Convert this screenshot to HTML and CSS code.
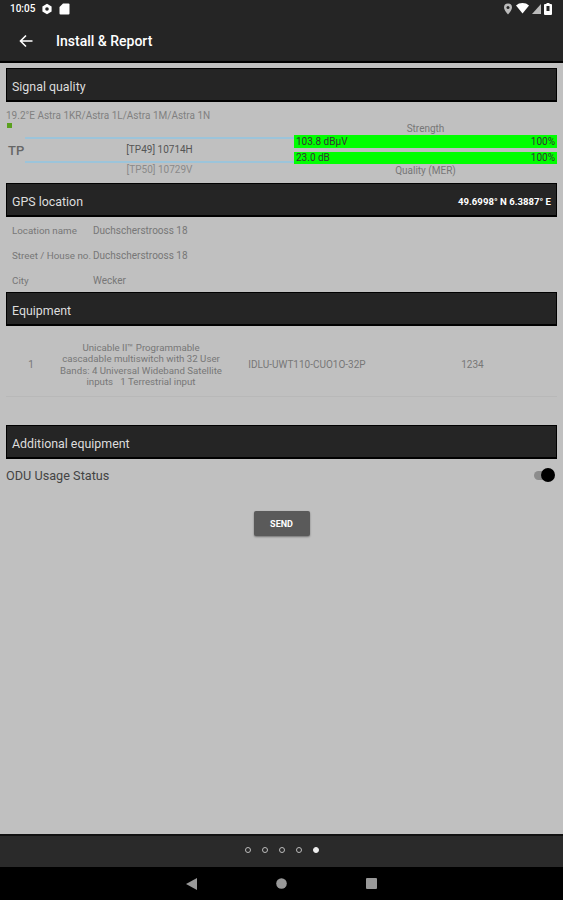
FILE: index.html
```html
<!DOCTYPE html>
<html lang="en">
<head>
  <meta charset="UTF-8">
  <meta name="viewport" content="width=device-width, initial-scale=1.0">
  <title>Install &amp; Report</title>
  <link rel="stylesheet" href="styles.css">
</head>
<body>
  <div class="app">
    <div class="statusbar">
      <div class="status-left">
        <span class="clock">10:05</span>
        <svg class="status-icon" width="12" height="12" viewBox="0 0 12 12"><path fill="#fff" d="M6 .8l4.6 2.6v5.2L6 11.200 1.400 8.600V3.400z"/><circle cx="6" cy="6" r="1.800" fill="#252525"/></svg>
        <svg class="status-icon" width="11" height="12" viewBox="0 0 11 12"><path fill="#fff" d="M4 .5h5.500a1 1 0 0 1 1 1v9a1 1 0 0 1-1 1h-8a1 1 0 0 1-1-1V4z"/></svg>
      </div>
      <div class="status-right">
        <svg width="10" height="12" viewBox="0 0 10 12"><path fill="#bbb" d="M5 .5a4 4 0 0 1 4 4c0 2.800-4 7-4 7s-4-4.200-4-7a4 4 0 0 1 4-4z"/><circle cx="5" cy="4.500" r="1.500" fill="#252525"/></svg>
        <svg width="13" height="11" viewBox="0 0 13 11"><path fill="#fff" d="M0 2.500C3.500-.8 9.500-.8 13 2.500L6.500 10.500z"/></svg>
        <svg width="9" height="10" viewBox="0 0 9 10"><path fill="#bbb" d="M9 0v10H0z"/></svg>
        <svg width="8" height="12" viewBox="0 0 8 12"><path fill="#fff" d="M2.500 0h3v1H7a1 1 0 0 1 1 1v9a1 1 0 0 1-1 1H1a1 1 0 0 1-1-1V2a1 1 0 0 1 1-1h1.500z"/><rect x="2.500" y="3" width="3" height="5" fill="#252525"/></svg>
      </div>
    </div>
    <div class="toolbar">
      <svg class="back" width="14" height="14" viewBox="0 0 14 14"><path fill="none" stroke="#fff" stroke-width="1.600" d="M13.500 7H1.500M7 1.500L1.500 7 7 12.500"/></svg>
      <span class="toolbar-title">Install &amp; Report</span>
    </div>

    <div class="content">
      <div class="section-header">Signal quality</div>
      <div class="signal">
        <div class="satellite">19.2°E Astra 1KR/Astra 1L/Astra 1M/Astra 1N</div>
        <div class="sat-dot"></div>
        <div class="signal-grid">
          <div class="tp-label">TP</div>
          <div class="tp-list">
            <div class="tp-current">[TP49] 10714H</div>
            <div class="tp-next">[TP50] 10729V</div>
          </div>
          <div class="meters">
            <div class="meter-title">Strength</div>
            <div class="meter"><span>103.8 dBµV</span><span>100%</span></div>
            <div class="meter"><span>23.0 dB</span><span>100%</span></div>
            <div class="meter-title">Quality (MER)</div>
          </div>
        </div>
      </div>

      <div class="section-header header-split">
        <span>GPS location</span>
        <span class="coords">49.6998° N 6.3887° E</span>
      </div>
      <div class="location">
        <div class="loc-row"><span class="loc-label">Location name</span><span>Duchscherstrooss 18</span></div>
        <div class="loc-row"><span class="loc-label">Street / House no.</span><span>Duchscherstrooss 18</span></div>
        <div class="loc-row"><span class="loc-label">City</span><span>Wecker</span></div>
      </div>

      <div class="section-header">Equipment</div>
      <div class="equipment">
        <div class="equip-row">
          <div class="equip-num">1</div>
          <div class="equip-desc">Unicable II™ Programmable cascadable multiswitch with 32 User Bands: 4 Universal Wideband Satellite inputs&nbsp;&nbsp; 1 Terrestrial input</div>
          <div class="equip-model">IDLU-UWT110-CUO1O-32P</div>
          <div class="equip-serial">1234</div>
        </div>
      </div>

      <div class="section-header">Additional equipment</div>
      <div class="odu">
        <span>ODU Usage Status</span>
        <div class="switch"><div class="switch-thumb"></div></div>
      </div>
      <div class="send-wrap"><button type="button" class="send-button">SEND</button></div>
    </div>

    <div class="pager">
      <span class="dot"></span>
      <span class="dot"></span>
      <span class="dot"></span>
      <span class="dot"></span>
      <span class="dot dot-active"></span>
    </div>
    <div class="navbar">
      <svg width="11" height="12" viewBox="0 0 11 12"><path fill="#999" d="M11 0v12L0 6z"/></svg>
      <svg width="11" height="11" viewBox="0 0 11 11"><circle cx="5.500" cy="5.500" r="5.300" fill="#999"/></svg>
      <svg width="11" height="11" viewBox="0 0 11 11"><rect width="11" height="11" rx="1" fill="#999"/></svg>
    </div>
  </div>
</body>
</html>
```
FILE: styles.css
```css
body {
  font-family: Roboto, "Liberation Sans", sans-serif;
  background-color: #c0c0c0;
  margin: 0;
  padding: 0;
}

.app {
  display: flex;
  flex-direction: column;
  height: 900px;
  overflow: hidden;
}

.statusbar {
  background: #252525;
  color: #fff;
  height: 22px;
  box-sizing: border-box;
  display: flex;
  justify-content: space-between;
  align-items: center;
  padding: 0 10px 5px;
  flex: none;
}

.status-left,
.status-right {
  display: flex;
  align-items: center;
}

.status-left {
  gap: 6px;
}

.status-right {
  gap: 3px;
  margin-right: 1px;
}

.clock {
  font-size: 10px;
  font-weight: 500;
}

.toolbar {
  background: #252525;
  height: 41px;
  box-sizing: border-box;
  border-bottom: 2px solid #000;
  display: flex;
  align-items: center;
  padding: 1px 0 3px 19px;
  flex: none;
}

.back {
  margin-right: 23px;
}

.toolbar-title {
  color: #fff;
  font-size: 14px;
  font-weight: 500;
}

.content {
  flex: 1;
  padding: 5px 6px 0;
  color: #777;
  font-size: 10px;
}

.section-header {
  background: #252525;
  color: #ddd;
  height: 34px;
  box-sizing: border-box;
  border: 1px solid #000;
  border-bottom-width: 2px;
  display: flex;
  align-items: center;
  padding: 3px 0 0 5px;
  font-size: 12.4px;
}

.header-split {
  justify-content: space-between;
  padding-right: 5px;
}

.coords {
  color: #fff;
  font-size: 9.6px;
  font-weight: 700;
}

.signal {
  height: 81px;
}

.satellite {
  padding-top: 8px;
  line-height: 12px;
  color: #808080;
}

.sat-dot {
  width: 5px;
  height: 5px;
  margin: 1px 0 0 1px;
  background: #5aa01e;
}

.signal-grid {
  display: grid;
  grid-template-columns: 19px 269px 263px;
}

.tp-label {
  font-size: 13px;
  font-weight: 500;
  color: #666;
  padding: 9px 0 0 2px;
  margin-top: 6px;
}

.tp-list {
  text-align: center;
  padding-top: 9px;
}

.tp-current {
  border-top: 2px solid #9cc4da;
  border-bottom: 2px solid #9cc4da;
  height: 22px;
  line-height: 22px;
  color: #555;
}

.tp-next {
  color: #8a8a8a;
  line-height: 13px;
}

.meters {
  text-align: center;
  margin-top: -5px;
}

.meter-title {
  line-height: 12px;
  color: #777;
}

.meter {
  background: #00ff00;
  color: #333;
  height: 13px;
  line-height: 13px;
  display: flex;
  justify-content: space-between;
  padding: 0 2px;
  margin-bottom: 4px;
}

.meter + .meter {
  height: 12px;
  line-height: 12px;
  margin-bottom: 1px;
}

.location {
  height: 75px;
  padding: 7px 0 0 6px;
  box-sizing: border-box;
}

.loc-row {
  display: flex;
  height: 25px;
  line-height: 14px;
}

.loc-label {
  width: 81px;
  flex: none;
  font-size: 9.8px;
  white-space: nowrap;
}

.equipment {
  height: 99px;
}

.equip-row {
  display: grid;
  grid-template-columns: 50px 170px 162px 1fr;
  align-items: center;
  height: 71px;
  box-sizing: border-box;
  padding-top: 7px;
  border-bottom: 1px solid #b8b8b8;
  text-align: center;
  line-height: 11.5px;
}

.equip-desc {
  font-size: 9.7px;
  padding: 0 2px;
}

.odu {
  display: flex;
  justify-content: space-between;
  align-items: center;
  height: 33px;
  font-size: 12.7px;
  color: #444;
}

.switch {
  width: 20px;
  height: 9px;
  margin-right: 3px;
  border-radius: 5px;
  background: #8c8c8c;
  position: relative;
}

.switch-thumb {
  position: absolute;
  right: -1px;
  top: -3px;
  width: 14px;
  height: 14px;
  border-radius: 50%;
  background: #000;
}

.send-wrap {
  display: flex;
  justify-content: center;
  padding-top: 19px;
}

.send-button {
  font-family: inherit;
  background: #5a5a5a;
  color: #fff;
  border: none;
  border-radius: 2px;
  width: 56px;
  height: 25px;
  font-size: 9px;
  font-weight: 700;
  box-shadow: 0 1px 2px rgba(0, 0, 0, 0.4);
}

.pager {
  background: #2a2a2a;
  border-top: 2px solid #111;
  height: 33px;
  box-sizing: border-box;
  padding-bottom: 4px;
  display: flex;
  justify-content: center;
  align-items: center;
  gap: 11px;
  flex: none;
}

.dot {
  width: 6px;
  height: 6px;
  border: 1px solid #bbb;
  border-radius: 50%;
  box-sizing: border-box;
}

.dot-active {
  background: #eee;
  border-color: #eee;
}

.navbar {
  background: #000;
  height: 33px;
  display: flex;
  justify-content: center;
  align-items: center;
  gap: 79px;
  flex: none;
}
```
